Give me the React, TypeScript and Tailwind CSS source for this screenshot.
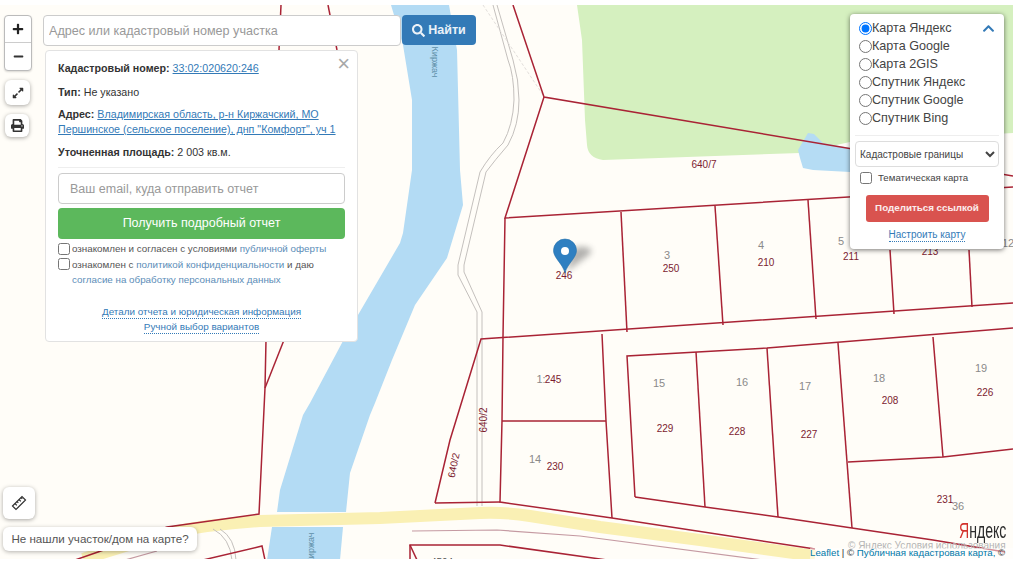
import { FaSearch, FaPrint, FaExpandAlt, FaChevronUp, FaPlus, FaMinus } from "react-icons/fa";

const sans = "font-['Liberation_Sans',Arial,sans-serif]";

// cadastral boundaries, page coordinates
const RED_LINES = [
  "M281 5L279 50",
  "M328 5L337 50",
  "M266 340L265 388L259 514L167 527L98 552L75 560",
  "M284 340L265 388",
  "M203 560L262 546L265 560",
  "M513 5L544 97L1013 176",
  "M544 97L505 218L1013 187",
  "M505 218L503 337L502 421L500 502L612 518L815 549",
  "M435 503L450 440L481 339L1013 303",
  "M435 503L500 502",
  "M621 212L627 332",
  "M715 206L723 325",
  "M808 200L816 319",
  "M890 250L894 314",
  "M969 250L972 307",
  "M602 334L606 421L612 518",
  "M502 421L606 421",
  "M635 497L627 356L767 348L1013 328",
  "M635 497L705 507L778 517L852 528L933 540L1005 552",
  "M696 352L705 507",
  "M767 348L778 517",
  "M838 343L852 528",
  "M933 337L943 457",
  "M848 462L943 457L1013 449",
  "M410 560L410 545L500 545L607 560",
  "M410 545L417 560",
];

const GREY_LINES = [
  "M477 506L477 312L458 275L458 265L480 172Q490 155 503 143Q513 125 514 100Q514 75 508 60L493 5",
  "M482 506L482 312L464 272L464 265L486 172Q495 160 508 145Q519 125 519 100Q519 80 513 60L497 5",
  "M213 529Q230 538 232 560",
  "M220 529Q235 538 236 560",
];

const PINK_LINES = ["M412 531L497 530L580 536L763 560", "M125 560L157 551"];

const PLOT_NUMBERS: [string, number, number][] = [
  ["640/7", 704, 168],
  ["250", 671, 272],
  ["210", 766, 266],
  ["211", 851, 260],
  ["213", 930, 255],
  ["246", 564, 279],
  ["245", 553, 383],
  ["230", 555, 470],
  ["229", 665, 432],
  ["228", 737, 435],
  ["227", 809, 438],
  ["208", 890, 404],
  ["226", 985, 396],
  ["231", 945, 503],
];

const PLOT_NAMES: [string, number, number][] = [
  ["3", 667, 259],
  ["4", 761, 249],
  ["5", 841, 245],
  ["12", 1008, 247],
  ["1:", 541, 383],
  ["14", 535, 463],
  ["15", 659, 387],
  ["16", 742, 386],
  ["17", 805, 390],
  ["18", 879, 382],
  ["19", 981, 372],
  ["36", 958, 510],
];

function MapCanvas() {
  return (
    <svg className="absolute inset-0" width="1023" height="576" viewBox="0 0 1023 576">
      <defs>
        <clipPath id="map-clip">
          <rect x="0" y="5" width="1013" height="554" />
        </clipPath>
        <filter id="soft" x="-50%" y="-50%" width="200%" height="200%">
          <feGaussianBlur stdDeviation="3" />
        </filter>
      </defs>
      <g clipPath="url(#map-clip)">
        <rect x="0" y="5" width="1013" height="554" fill="#fffdf8" />
        {/* forest */}
        <path d="M577 5H1013V133L850 142L800 153L603 160Q588 158 587 145L585 120L582 40Z" fill="#d5f0bf" />
        {/* pond */}
        <path d="M808 133L814 134L823 143L850 148V172L813 170L803 168L800 158L798 150Z" fill="#b5dcf4" />
        {/* river */}
        <path
          d="M391 5H449L457 50L460 170L463 205L447 258L415 305L392 360L375 403L370 415L350 473L346 512H277L280 490L303 415L310 403L343 341L358 315L400 243L403 233L412 170L412 100L403 45Z"
          fill="#b3dbf4"
        />
        <path d="M272 527H343L340 560H267Z" fill="#b3dbf4" />
        {/* road */}
        <path
          d="M83 559L167 533Q210 524 260 521L380 518L480 513Q505 512 530 516L600 527L700 540L815 556"
          fill="none"
          stroke="#faf0b4"
          strokeWidth="12"
        />
        {GREY_LINES.map((d) => (
          <path key={d} d={d} fill="none" stroke="#c4c0bd" strokeWidth="1" />
        ))}
        <path d="M483 5L543 95" fill="none" stroke="#e2dedb" strokeWidth="1" strokeDasharray="3 2" />
        {PINK_LINES.map((d) => (
          <path key={d} d={d} fill="none" stroke="#c59aa2" strokeWidth="1.2" />
        ))}
        {RED_LINES.map((d) => (
          <path key={d} d={d} fill="none" stroke="#a92335" strokeWidth="1.5" />
        ))}
        <g className={sans} fontSize="10" fill="#7c1c30" textAnchor="middle">
          {PLOT_NUMBERS.map(([label, x, y]) => (
            <text key={label} x={x} y={y}>
              {label}
            </text>
          ))}
          <text transform="translate(487 420) rotate(-90)">640/2</text>
          <text transform="translate(457 466) rotate(-78)">640/2</text>
          <text x="442" y="566" fill="#555">
            4504
          </text>
        </g>
        <g className={sans} fontSize="11" fill="#8a8a8a" textAnchor="middle">
          {PLOT_NAMES.map(([label, x, y]) => (
            <text key={label} x={x} y={y}>
              {label}
            </text>
          ))}
        </g>
        <g className={sans} fontSize="9" fill="#5f8fa8" textAnchor="middle">
          <text transform="translate(432 62) rotate(90)">Киржач</text>
          <text transform="translate(314 548) rotate(-90)">Киржач</text>
        </g>
        {/* marker */}
        <path d="M566 272L590 254Q594 248 584 247Q574 246 572 252Z" fill="#555" opacity="0.45" filter="url(#soft)" />
        <path
          d="M565 273C563 264 553.5 258 553.5 250.5A11.5 11.5 0 0 1 576.5 250.5C576.5 258 567 264 565 273Z"
          fill="#2e7fc1"
          stroke="#2672ad"
          strokeWidth="0.6"
        />
        <circle cx="565" cy="251" r="4" fill="#fff" />
      </g>
    </svg>
  );
}

function TextLink({ children }: { children: string }) {
  return <span className="text-[#5b8db8]">{children}</span>;
}

function ReportPanel() {
  return (
    <div className="absolute left-[45px] top-[50px] flex h-[292px] w-[313px] flex-col rounded border border-[#e2e2e2] bg-white px-[12px] text-[#333]">
      <span className="absolute right-[7px] top-[2px] text-[22px] leading-[22px] font-light text-[#a8a8a8]">×</span>
      <div className="mt-[10px] text-[10.7px] leading-[15px]">
        <b>Кадастровый номер:</b>{" "}
        <span className="text-[#337ab7] underline">33:02:020620:246</span>
      </div>
      <div className="mt-[9px] text-[10.7px] leading-[15px]">
        <b>Тип:</b> Не указано
      </div>
      <div className="mt-[7px] text-[10.7px] leading-[15px]">
        <b>Адрес:</b>{" "}
        <span className="text-[#337ab7] underline">Владимирская область, р-н Киржачский, МО Першинское (сельское поселение), днп "Комфорт", уч 1</span>
      </div>
      <div className="mt-[8px] text-[10.7px] leading-[15px]">
        <b>Уточненная площадь:</b> 2 003 кв.м.
      </div>
      <div className="mt-[7px] h-px bg-[#eee]" />
      <input
        className="mt-[5px] h-[31px] w-full rounded border border-[#ccc] bg-white px-[11px] text-[12.5px] placeholder:text-[#999]"
        placeholder="Ваш email, куда отправить отчет"
      />
      <div className="mt-[4px] flex h-[31px] items-center justify-center rounded bg-[#5cb85c] text-[12.5px] text-white">
        Получить подробный отчет
      </div>
      <div className="mt-[2px] flex flex-col text-[9.8px] leading-[15px] text-[#555]">
        <label className="flex items-center">
          <input type="checkbox" className="m-0 mr-[2px] h-[12px] w-[12px] shrink-0" />
          <span>
            ознакомлен и согласен с условиями <TextLink>публичной оферты</TextLink>
          </span>
        </label>
        <label className="mt-[1px] flex items-start">
          <input type="checkbox" className="m-0 mr-[2px] mt-[1px] h-[12px] w-[12px] shrink-0" />
          <span>
            ознакомлен с <TextLink>политикой конфиденциальности</TextLink> и даю <br />
            <TextLink>согласие на обработку персональных данных</TextLink>
          </span>
        </label>
      </div>
      <div className="mt-[18px] flex flex-col items-center gap-[1px] text-[9.9px] leading-[14px] text-[#337ab7]">
        <span className="border-b border-dotted border-[#337ab7] leading-[13px]">Детали отчета и юридическая информация</span>
        <span className="border-b border-dotted border-[#337ab7] leading-[13px]">Ручной выбор вариантов</span>
      </div>
    </div>
  );
}

function LayersPanel() {
  const layers = ["Карта Яндекс", "Карта Google", "Карта 2GIS", "Спутник Яндекс", "Спутник Google", "Спутник Bing"];
  return (
    <div className="absolute left-[850px] top-[14px] flex h-[235px] w-[154px] flex-col rounded bg-white px-[5px] text-[#444] shadow-[0_1px_5px_rgba(0,0,0,0.55)]">
      <FaChevronUp className="absolute right-[9px] top-[8px] text-[13px] text-[#337ab7]" />
      <div className="mt-[5px] flex flex-col pl-[4px]">
        {layers.map((name, i) => (
          <label key={name} className="flex h-[18px] items-center text-[12.6px]">
            <input type="radio" name="layer" defaultChecked={i === 0} className="m-0 h-[13px] w-[13px]" />
            <span>{name}</span>
          </label>
        ))}
      </div>
      <div className="mt-[8px] h-px bg-[#eee]" />
      <select className="mt-[5px] h-[26px] w-full rounded border border-[#ddd] bg-white pl-0 text-[10px] text-[#444]">
        <option>Кадастровые границы</option>
      </select>
      <label className="mt-[5px] flex h-[12px] items-center pl-[5px] text-[9.7px] text-[#444]">
        <input type="checkbox" className="m-0 mr-[6px] h-[12px] w-[12px]" />
        <span>Тематическая карта</span>
      </label>
      <div className="mx-auto mt-[11px] flex h-[27px] w-[123px] items-center justify-center rounded-[3px] bg-[#d9534f] text-[9.8px] font-bold text-white/90">
        Поделиться ссылкой
      </div>
      <span className="mx-auto mt-[7px] border-b border-dotted border-[#337ab7] text-[10px] leading-[12px] text-[#337ab7]">
        Настроить карту
      </span>
    </div>
  );
}

function MapButton({ className, children }: { className: string; children: React.ReactNode }) {
  return (
    <div className={`absolute flex items-center justify-center rounded-md bg-white text-[#333] shadow-[0_1px_4px_rgba(0,0,0,0.35)] ${className}`}>
      {children}
    </div>
  );
}

export default function App() {
  return (
    <div className={`relative h-[576px] w-[1023px] overflow-hidden bg-white ${sans}`}>
      <MapCanvas />

      {/* zoom */}
      <div className="absolute left-[4px] top-[15px] flex w-[28px] flex-col rounded border border-[#bbb] bg-white shadow-[0_1px_2px_rgba(0,0,0,0.15)]">
        <div className="flex h-[27px] items-center justify-center border-b border-[#ccc] text-[#222]">
          <FaPlus className="text-[12px]" />
        </div>
        <div className="flex h-[27px] items-center justify-center text-[#333]">
          <FaMinus className="text-[11px]" />
        </div>
      </div>
      <MapButton className="left-[5px] top-[80px] h-[25px] w-[25px]">
        <FaExpandAlt className="text-[12px]" />
      </MapButton>
      <MapButton className="left-[5px] top-[114px] h-[23px] w-[24px]">
        <FaPrint className="text-[13px]" />
      </MapButton>
      <MapButton className="left-[3px] top-[487px] h-[32px] w-[32px]">
        <svg width="16" height="16" viewBox="0 0 16 16" fill="none" stroke="#333" strokeWidth="1.2">
          <path d="M1.5 11L11 1.5L14.5 5L5 14.5Z" />
          <path d="M4 8.5L5.8 10.3M6 6.5L7.3 7.8M8 4.5L9.8 6.3M10 2.5L11.3 3.8" />
        </svg>
      </MapButton>

      {/* search */}
      <div className="absolute left-[43px] top-[15px] flex items-start gap-px">
        <input
          className="h-[31px] w-[358px] rounded border border-[#ccc] bg-white px-[5px] text-[12.6px] placeholder:text-[#999]"
          placeholder="Адрес или кадастровый номер участка"
        />
        <div className="flex h-[30px] w-[74px] items-center justify-center gap-[3px] rounded bg-[#337ab7] text-[12.5px] font-bold text-white/90">
          <FaSearch className="text-[13px]" />
          Найти
        </div>
      </div>

      <ReportPanel />
      <LayersPanel />

      {/* not found hint */}
      <div className="absolute left-[3px] top-[527px] flex h-[24px] w-[194px] items-center justify-center rounded-md bg-white text-[11.6px] text-[#555] shadow-[0_1px_4px_rgba(0,0,0,0.3)]">
        Не нашли участок/дом на карте?
      </div>

      {/* map copyright */}
      <div className="absolute left-[959px] top-[519px] scale-x-[0.64] origin-left text-[22px] leading-[24px] text-[#2b2b2b]">
        <span className="text-[#d3322c]">Я</span>ндекс
      </div>
      <div className="absolute left-[848px] top-[543px] text-[10px] leading-[6px] text-[#b5b5b5]">© Яндекс Условия использования</div>
      <div className="absolute left-[810px] top-[548px] flex h-[11px] w-[203px] items-center whitespace-nowrap bg-white/50 text-[9.7px] text-[#333]">
        <span className="text-[#0078a8]">Leaflet</span>
        <span>&nbsp;| ©&nbsp;</span>
        <span className="text-[#0078a8]">Публичная кадастровая карта,</span>
        <span>&nbsp;©</span>
      </div>
    </div>
  );
}
